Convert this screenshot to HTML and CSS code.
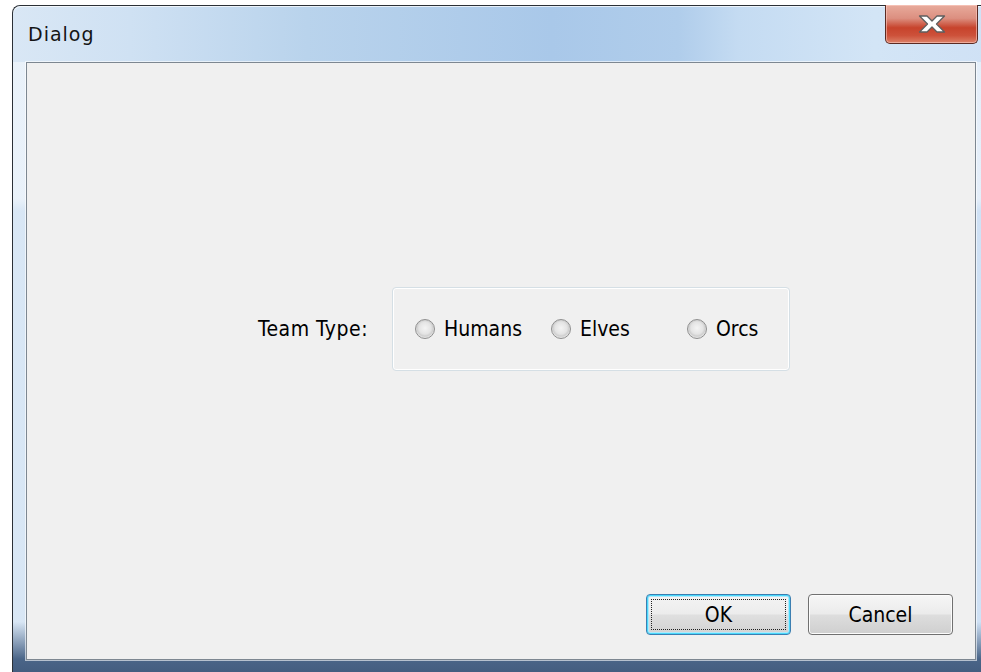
FILE: index.html
```html
<!DOCTYPE html>
<html lang="en">
<head>
<meta charset="utf-8">
<title>Dialog</title>
<link rel="stylesheet" href="styles.css">
</head>
<body>
<div class="window">
  <div class="titlebar">
    <span class="title">Dialog</span>
    <button class="close" aria-label="Close">
      <svg width="30" height="20" viewBox="0 0 30 20">
        <path d="M2.5 2 L10 2 L15 7 L20 2 L27.5 2 L19.5 10 L27.5 18 L20 18 L15 13 L10 18 L2.5 18 L10.5 10 Z" fill="#ffffff" stroke="#5e5e5e" stroke-width="1.3" stroke-linejoin="round"/>
      </svg>
    </button>
  </div>
  <div class="frame">
    <div class="panel">
      <div class="form-row">
        <span class="label">Team Type:</span>
        <div class="groupbox">
          <label class="radio"><span class="dot"></span>Humans</label>
          <label class="radio"><span class="dot"></span>Elves</label>
          <label class="radio"><span class="dot"></span>Orcs</label>
        </div>
      </div>
      <div class="buttons">
        <button class="btn btn-default"><span class="focus">OK</span></button>
        <button class="btn">Cancel</button>
      </div>
    </div>
  </div>
</div>
</body>
</html>
```
FILE: styles.css
```css
html, body {
  margin: 0;
  padding: 0;
  background: #ffffff;
  overflow: hidden;
  width: 981px;
  height: 672px;
}

body {
  font-family: "DejaVu Sans", "Liberation Sans", sans-serif;
  color: #000;
}

/* Aero-style window chrome */
.window {
  margin: 5px 0 0 12px;
  width: 980px;
  height: 680px;
  border: 1px solid #2b3036;
  border-right: none;
  border-radius: 8px 0 0 0;
  box-sizing: border-box;
  display: flex;
  flex-direction: column;
  background: linear-gradient(90deg, #d9e7f5 0%, #cfe1f3 12%, #b9d3ec 30%, #a9c8e9 55%, #b0cdeb 68%, #c4dbf2 74%, #d3e5f6 88%, #cfe1f5 100%);
}

.titlebar {
  height: 56px;
  flex: none;
  display: flex;
  align-items: flex-start;
  justify-content: space-between;
  box-shadow: inset 0 1px 0 rgba(255,255,255,0.7);
  border-radius: 8px 0 0 0;
}

.title {
  font-family: "DejaVu Sans", sans-serif;
  font-size: 19px;
  letter-spacing: 1px;
  color: #141414;
  margin: 17px 0 0 15px;
}

.close {
  margin: -1px 14px 0 0;
  width: 93px;
  height: 39px;
  border: 1px solid #5b2a22;
  border-top: none;
  border-radius: 0 0 5px 5px;
  background: linear-gradient(180deg, #e8ab9c 0%, #dc8f80 35%, #c7432c 60%, #cd513a 80%, #dc8168 100%);
  box-shadow: inset 0 0 0 1px rgba(255,210,200,0.55);
  display: flex;
  align-items: center;
  justify-content: center;
  padding: 0;
}

.frame {
  flex: 1;
  padding: 0 4px 0 13px;
  background: linear-gradient(180deg, rgba(255,255,255,0.45) 0%, rgba(255,255,255,0.45) 22%, rgba(255,255,255,0) 24%, rgba(255,255,255,0) 88%),
              linear-gradient(180deg, transparent 0%, transparent 90%, #4a6588 96%, #3e5678 100%);
  display: flex;
}

.panel {
  width: 950px;
  height: 598px;
  box-sizing: border-box;
  border: 1px solid #7d8791;
  box-shadow: 0 0 0 1px rgba(255,255,255,0.6);
  background: #f0f0f0;
  display: flex;
  flex-direction: column;
  justify-content: space-between;
}

.form-row {
  display: flex;
  align-items: center;
  margin: 224px 0 0 231px;
}

.label,
.radio,
.btn {
  font-family: "DejaVu Sans Condensed", "DejaVu Sans", sans-serif;
  font-stretch: condensed;
  font-size: 21px;
}

.label {
  width: 134px;
  letter-spacing: 0.5px;
}

.groupbox {
  width: 398px;
  height: 84px;
  box-sizing: border-box;
  border: 1px solid #d5dfe5;
  border-radius: 4px;
  box-shadow: inset 0 0 0 1px #ffffff;
  display: flex;
  align-items: center;
  padding-left: 22px;
}

.radio {
  flex: none;
  width: 136px;
  display: flex;
  align-items: center;
  gap: 9px;
}

.radio:last-child {
  width: auto;
}

.dot {
  width: 20px;
  height: 20px;
  border-radius: 50%;
  border: 1px solid #8f8f8f;
  background: radial-gradient(circle at 50% 45%, #f4f4f4 0%, #e4e4e4 45%, #cfcfcf 60%, #f2f2f2 78%, #f6f6f6 100%);
  box-sizing: border-box;
}

.buttons {
  display: flex;
  justify-content: flex-end;
  gap: 17px;
  margin: 0 22px 24px 0;
}

.btn {
  width: 145px;
  height: 41px;
  border: 1px solid #707070;
  border-radius: 4px;
  background: linear-gradient(180deg, #f6f6f6 0%, #ebebeb 48%, #dddddd 52%, #cfcfcf 100%);
  box-shadow: inset 0 0 0 1px #fcfcfc;
  color: #000;
  padding: 0;
  display: flex;
  align-items: center;
  justify-content: center;
}

.btn-default {
  border-color: #3c7fb1;
  box-shadow: inset 0 0 0 1px #48d8fb, inset 0 0 0 2px #b0e8fb;
  background: linear-gradient(180deg, #f4f4f4 0%, #ececec 48%, #dfdfdf 52%, #d3d3d3 100%);
}

.focus {
  width: 135px;
  height: 31px;
  box-sizing: border-box;
  border: 1px dotted #222;
  display: flex;
  align-items: center;
  justify-content: center;
}
```
